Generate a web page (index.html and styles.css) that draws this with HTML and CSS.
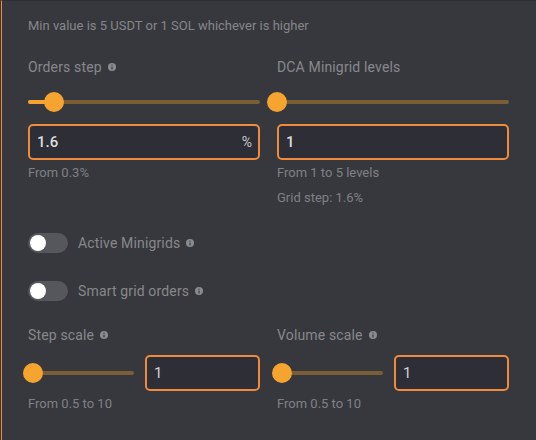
FILE: index.html
```html
<!DOCTYPE html>
<html>
<head>
<meta charset="utf-8">
<link rel="stylesheet" href="styles.css">
</head>
<body>
<div class="panel">
  <div class="note">Min value is 5 USDT or 1 SOL whichever is higher</div>

  <div class="cols">
    <div class="col">
      <div class="label">Orders step <svg class="info" viewBox="0 0 8 8"><circle cx="4" cy="4" r="4"/><rect x="3.4" y="3.4" width="1.2" height="3" rx="0.3"/><circle cx="4" cy="2.1" r="0.7"/></svg></div>
      <div class="slider">
        <div class="track"></div>
        <div class="fill" style="width:26px"></div>
        <div class="thumb" style="left:16px"></div>
      </div>
      <div class="input"><span class="val">1.6</span><span class="unit">%</span></div>
      <div class="hint">From 0.3%</div>
    </div>
    <div class="col">
      <div class="label">DCA Minigrid levels</div>
      <div class="slider">
        <div class="track"></div>
        <div class="thumb" style="left:-10px"></div>
      </div>
      <div class="input"><span class="val">1</span></div>
      <div class="hint">From 1 to 5 levels</div>
      <div class="hint second">Grid step: 1.6%</div>
    </div>
  </div>

  <div class="toggle-row first">
    <div class="toggle"><div class="knob"></div></div>
    <span class="tlabel">Active Minigrids</span>
    <svg class="info" viewBox="0 0 8 8"><circle cx="4" cy="4" r="4"/><rect x="3.4" y="3.4" width="1.2" height="3" rx="0.3"/><circle cx="4" cy="2.1" r="0.7"/></svg>
  </div>
  <div class="toggle-row">
    <div class="toggle"><div class="knob"></div></div>
    <span class="tlabel">Smart grid orders</span>
    <svg class="info" viewBox="0 0 8 8"><circle cx="4" cy="4" r="4"/><rect x="3.4" y="3.4" width="1.2" height="3" rx="0.3"/><circle cx="4" cy="2.1" r="0.7"/></svg>
  </div>

  <div class="cols bottom">
    <div class="col">
      <div class="label">Step scale <svg class="info" viewBox="0 0 8 8"><circle cx="4" cy="4" r="4"/><rect x="3.4" y="3.4" width="1.2" height="3" rx="0.3"/><circle cx="4" cy="2.1" r="0.7"/></svg></div>
      <div class="scale-row">
        <div class="slider small">
          <div class="track"></div>
          <div class="thumb" style="left:-5px"></div>
        </div>
        <div class="input sm"><span class="val light">1</span></div>
      </div>
      <div class="hint">From 0.5 to 10</div>
    </div>
    <div class="col">
      <div class="label">Volume scale <svg class="info" viewBox="0 0 8 8"><circle cx="4" cy="4" r="4"/><rect x="3.4" y="3.4" width="1.2" height="3" rx="0.3"/><circle cx="4" cy="2.1" r="0.7"/></svg></div>
      <div class="scale-row">
        <div class="slider small">
          <div class="track"></div>
          <div class="thumb" style="left:-5px"></div>
        </div>
        <div class="input sm"><span class="val light">1</span></div>
      </div>
      <div class="hint">From 0.5 to 10</div>
    </div>
  </div>
</div>
</body>
</html>
```

FILE: styles.css
```css
html, body {
  margin: 0;
  padding: 0;
  background: #37383d;
  height: 100%;
}
body {
  font-family: Roboto, "Liberation Sans", sans-serif;
  color: #87888c;
}
.panel {
  box-sizing: border-box;
  height: 440px;
  margin-left: 1px;
  border-left: 1px solid #f08a3c;
  border-top: 1px solid #2f3034;
  padding: 17px 26px 0 26px;
  background: #37383d;
}
.note {
  font-size: 13px;
  line-height: 16px;
  color: #85868a;
}
.cols {
  display: grid;
  grid-template-columns: 232px 232px;
  column-gap: 17px;
  margin-top: 23px;
}
.col {
  display: flex;
  flex-direction: column;
}
.label {
  font-size: 14px;
  line-height: 20px;
  letter-spacing: 0.15px;
  color: #87888c;
  display: flex;
  align-items: center;
}
.info {
  width: 8px;
  height: 8px;
  margin-left: 6px;
  flex: none;
}
.info circle:first-child { fill: #8a8b8f; }
.info rect, .info circle + rect + circle { fill: #37383d; }
.slider {
  position: relative;
  height: 20px;
  margin-top: 15px;
}
.track {
  position: absolute;
  left: 0;
  right: 0;
  top: 8px;
  height: 4px;
  border-radius: 2px;
  background: #7a5e36;
}
.fill {
  position: absolute;
  left: 0;
  top: 8px;
  height: 4px;
  border-radius: 2px;
  background: #f5a430;
}
.thumb {
  position: absolute;
  top: 0;
  width: 20px;
  height: 20px;
  border-radius: 50%;
  background: #f5a430;
}
.input {
  box-sizing: border-box;
  height: 36px;
  margin-top: 12px;
  border: 2px solid #f08a3c;
  border-radius: 5px;
  background: #2d2e36;
  display: flex;
  align-items: center;
  justify-content: space-between;
  padding: 0 6px 0 7px;
}
.val {
  font-size: 15px;
  font-weight: 500;
  color: #dcdcde;
}
.val.light {
  font-weight: 400;
  color: #d2d2d5;
}
.unit {
  font-size: 14px;
  color: #c8c8cb;
}
.hint {
  font-size: 13px;
  line-height: 16px;
  margin-top: 5px;
  color: #7f8085;
}
.hint.second {
  margin-top: 9px;
}
.toggle-row {
  display: flex;
  align-items: center;
  height: 20px;
  margin-top: 28px;
}
.toggle-row.first {
  margin-top: 27px;
}
.toggle {
  box-sizing: border-box;
  width: 40px;
  height: 20px;
  border-radius: 10px;
  background: #56575c;
  padding: 2px;
  display: flex;
  align-items: center;
}
.knob {
  width: 16px;
  height: 16px;
  border-radius: 50%;
  background: #ffffff;
}
.tlabel {
  font-size: 14px;
  letter-spacing: 0.15px;
  margin-left: 10px;
  color: #87888c;
}
.cols.bottom {
  margin-top: 24px;
}
.scale-row {
  display: flex;
  align-items: center;
  gap: 11px;
  margin-top: 10px;
}
.slider.small {
  flex: 1;
  margin-top: 0;
}
.input.sm {
  width: 115px;
  margin-top: 0;
  flex: none;
}
```
